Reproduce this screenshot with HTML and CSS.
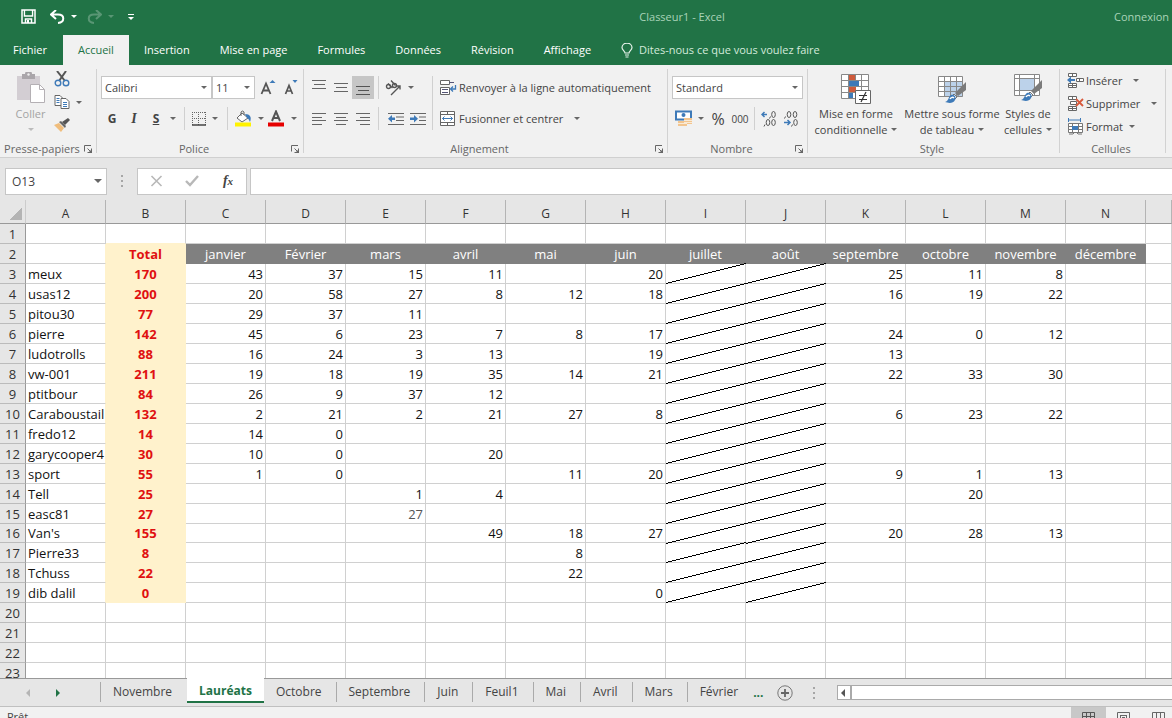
FILE: index.html
```html
<!DOCTYPE html>
<html lang="fr">
<head>
<meta charset="utf-8">
<title>Classeur1 - Excel</title>
<link rel="stylesheet" href="styles.css">
</head>
<body>
<svg class="defs" aria-hidden="true">
  <symbol id="launch" viewBox="0 0 9 9"><path d="M.5 6.500V.5H7M3.500 3.500L7 7M7.500 3.500V7.500H3.500" fill="none" stroke="#666"/><path d="M8 4v4H4z" fill="#666"/></symbol>
  <symbol id="brush" viewBox="0 0 22 22"><path d="M21 0v8l-8 6-3-3z" fill="#7b7b7b"/><path d="M9 12l3 3-2 2-3-3z" fill="#fff" stroke="#777"/><path d="M0 20c4-1 3-5 6-7 3-1 6 2 4 5-2 4-7 3-10 2z" fill="#3e7ab8"/><path d="M5 17c1-2 3-2 4-1" stroke="#fff" fill="none" stroke-width="1.500"/></symbol>
  <path id="slash" d="M0 19.500L80 -.5" stroke="#000" shape-rendering="crispEdges"/>
</svg>
<div class="app">
  <header class="titlebar">
    <div class="quick">
      <button aria-label="Enregistrer"><svg width="15" height="15" viewBox="0 0 15 15"><path d="M1 1h13v13H1zM3.500 1v6h8V1M4.500 14v-4h6v4" fill="none" stroke="#fff" stroke-width="1.500"/><path d="M6 11h2v3H6z" fill="#fff"/><path d="M4.500 2h6v4h-6z" fill="#217346"/></svg></button>
      <button aria-label="Annuler"><svg width="15" height="14" viewBox="0 0 15 14"><path d="M6 0L1 4.500 6 9M1 4.500h7c7 0 7 8 0 8.500" fill="none" stroke="#fff" stroke-width="2"/></svg><i class="caret"></i></button>
      <button class="faded" aria-label="Rétablir"><svg width="15" height="14" viewBox="0 0 15 14"><path d="M9 0l5 4.500L9 9M14 4.500H7c-7 0-7 8 0 8.500" fill="none" stroke="#fff" stroke-width="2"/></svg><i class="caret"></i></button>
      <button class="more" aria-label="Personnaliser"><i class="caret"></i></button>
    </div>
    <h1>Classeur1 - Excel</h1>
    <a href="#" class="login">Connexion</a>
  </header>
  <nav class="tabs">
    <button class="file">Fichier</button><button class="on">Accueil</button><button>Insertion</button><button>Mise en page</button><button>Formules</button><button>Données</button><button>Révision</button><button>Affichage</button>
    <button class="tell"><svg width="12" height="15" viewBox="0 0 12 15"><path d="M4 10c0-2-3-3-3-5.500a4.500 4 0 0 1 10 0C11 7 8 8 8 10zM4 12h4M4.500 14h3" fill="none" stroke="#e6f2ea" stroke-width="1.200"/></svg>Dites-nous ce que vous voulez faire</button>
  </nav>

  <section class="ribbon">
    <div class="group clip">
      <div class="body">
        <button class="big paste"><svg width="30" height="32" viewBox="0 0 30 32"><path d="M1 4h23v24H1z" fill="#d3ced3"/><path d="M6 2h3a3.500 3 0 0 1 7 0h3v5H6z" fill="#aaa6aa"/><circle cx="12.500" cy="2.500" r="1.200" fill="#eee"/><path d="M14.500 12.500h9l5 5v13h-14z" fill="#fff" stroke="#b4b0b4"/><path d="M23.500 12.500v5h5" fill="none" stroke="#b4b0b4"/></svg><span>Coller</span><i class="caret"></i></button>
        <div class="stack">
          <button aria-label="Couper"><svg width="16" height="16" viewBox="0 0 16 16"><path d="M3 0l8 10M12 0L5 10" stroke="#555" stroke-width="2"/><circle cx="4" cy="12" r="2.800" fill="none" stroke="#3e7ab8" stroke-width="1.400"/><circle cx="12" cy="12" r="2.800" fill="none" stroke="#3e7ab8" stroke-width="1.400"/></svg></button>
          <button aria-label="Copier"><svg width="16" height="16" viewBox="0 0 16 16"><path d="M1 1.500h5l3 3v7H1z" fill="#fff" stroke="#666"/><path d="M2.500 4.500h3m-3 2h3m-3 2h3" stroke="#3e7ab8"/><path d="M7 4.500h5l3 3v7H7z" fill="#fff" stroke="#666"/><path d="M9 8.500h4m-4 2h4m-4 2h4" stroke="#3e7ab8"/></svg><i class="caret"></i></button>
          <button aria-label="Reproduire la mise en forme"><svg width="16" height="14" viewBox="0 0 16 14"><path d="M0 7l5-2 5 5-3 4z" fill="#f0bd7c"/><path d="M5 4l2-1 5 5-1 2z" fill="#666"/><path d="M8 4l6-4 2 2-5 5z" fill="#555"/></svg></button>
        </div>
      </div>
      <footer><span>Presse-papiers</span><svg class="launch"><use href="#launch"/></svg></footer>
    </div>

    <div class="group font">
      <div class="body rows">
        <div class="row">
          <label class="combo wide"><select aria-label="Police"><option>Calibri</option></select></label>
          <label class="combo size"><select aria-label="Taille"><option>11</option></select></label>
          <button class="ic grow" aria-label="Agrandir"><svg width="17" height="17" viewBox="0 0 17 17"><path d="M1.500 15L6 4.500 10.500 15M3 11.500h6" fill="none" stroke="#555" stroke-width="1.800"/><path d="M9.500 4l3-3 3 3z" fill="#3e7ab8"/></svg></button>
          <button class="ic" aria-label="Réduire"><svg width="17" height="17" viewBox="0 0 17 17"><path d="M3.500 15L7 6.500l3.500 8.500M5 12h4.500" fill="none" stroke="#555" stroke-width="1.700"/><path d="M10.500 1h5l-2.500 3z" fill="#3e7ab8"/></svg></button>
        </div>
        <div class="row second">
          <button class="ic fmt b">G</button><button class="ic fmt i">I</button><button class="ic fmt u">S</button><button class="drop" aria-label="Soulignement"><i class="caret"></i></button>
          <span class="bar"></span>
          <button class="split" aria-label="Bordures"><svg width="14" height="14" viewBox="0 0 14 14"><path d="M0 .5h14M0 6.500h14M.5 0v13M6.500 0v13M13.500 0v13" stroke="#666" stroke-dasharray="1 1"/><path d="M0 13h14" stroke="#444" stroke-width="1.500"/></svg><i class="caret"></i></button>
          <span class="bar"></span>
          <button class="split" aria-label="Remplissage"><svg width="17" height="17" viewBox="0 0 17 17"><path d="M7 3l6 5-6 4-5-4z" fill="#fff" stroke="#666"/><path d="M6 6V2q1.500-2 3 0v3" fill="none" stroke="#666"/><path d="M10 4c5 0 7 3 5 8-1-2-1-3-3-4z" fill="#3e7ab8"/><path d="M0 12.500h16v4H0z" fill="#fff200"/></svg><i class="caret"></i></button>
          <button class="split" aria-label="Couleur"><svg width="17" height="17" viewBox="0 0 17 17"><path d="M4 11l4-9.500L12 11M5.500 8h5" fill="none" stroke="#555" stroke-width="2"/><path d="M0 12.500h16v4H0z" fill="#e60000"/></svg><i class="caret"></i></button>
        </div>
      </div>
      <footer><span>Police</span><svg class="launch"><use href="#launch"/></svg></footer>
    </div>

    <div class="group align">
      <div class="body">
        <div class="rows">
          <div class="row">
            <button class="ic" aria-label="Haut"><svg width="15" height="15" viewBox="0 0 15 15"><path d="M0 .5h14M2 4.500h11M0 8.500h14" stroke="#666"/></svg></button>
            <button class="ic" aria-label="Milieu"><svg width="15" height="15" viewBox="0 0 15 15"><path d="M0 3.500h14M2 7.500h11M0 11.500h14" stroke="#666"/></svg></button>
            <button class="ic pressed" aria-label="Bas"><svg width="15" height="15" viewBox="0 0 15 15"><path d="M0 6.500h14M2 10.500h11M0 14.500h14" stroke="#555"/></svg></button>
            <span class="bar"></span>
            <button class="split" aria-label="Orientation"><svg width="17" height="16" viewBox="0 0 17 16"><g fill="none" stroke="#555" stroke-width="1.400"><circle cx="3.500" cy="6.500" r="2"/><path d="M3 3.500l4.500 4.500M6 .5l4.500 5"/><circle cx="9.500" cy="5.500" r="2"/><path d="M6 15l9-9M11.500 6H15v3.500"/></g></svg><i class="caret"></i></button>
          </div>
          <div class="row second">
            <button class="ic" aria-label="Gauche"><svg width="15" height="12" viewBox="0 0 15 12"><path d="M0 .5h14M0 4.500h10M0 7.500h14M0 11.500h10" stroke="#666"/></svg></button>
            <button class="ic" aria-label="Centre"><svg width="15" height="12" viewBox="0 0 15 12"><path d="M0 .5h14M2 4.500h10M0 7.500h14M2 11.500h10" stroke="#666"/></svg></button>
            <button class="ic" aria-label="Droite"><svg width="15" height="12" viewBox="0 0 15 12"><path d="M0 .5h14M4 4.500h10M0 7.500h14M4 11.500h10" stroke="#666"/></svg></button>
            <span class="bar"></span>
            <button class="ic" aria-label="Diminuer le retrait"><svg width="17" height="14" viewBox="0 0 17 14"><path d="M0 1.500h16M8 5h8M8 8.500h8M0 12.500h16" stroke="#666"/><path d="M0 6.700L4 3v2.500h3V8H4v2.500z" fill="#3e7ab8"/></svg></button>
            <button class="ic" aria-label="Augmenter le retrait"><svg width="17" height="14" viewBox="0 0 17 14"><path d="M0 1.500h16M9 5h7M9 8.500h7M0 12.500h16" stroke="#666"/><path d="M8 6.700L4 3v2.500H0V8h4v2.500z" fill="#3e7ab8"/></svg></button>
          </div>
        </div>
        <span class="bar tall"></span>
        <div class="rows">
          <button class="row line"><svg width="17" height="16" viewBox="0 0 17 16"><path d="M.5.500h9v4h-9zM.5 7.500h9v7h-9z" fill="#fff" stroke="#666"/><path d="M2 9.500h6m-6 3h6M9 2.500h5" stroke="#557"/><path d="M15.500 5v4H11m2-2.500L10.500 9l2.500 2.500" fill="none" stroke="#3e7ab8" stroke-width="1.300"/></svg><span>Renvoyer à la ligne automatiquement</span></button>
          <button class="row line second"><svg width="17" height="16" viewBox="0 0 17 16"><path d="M.5.500h14v14H.5zM.5 3.500h14M.5 11.500h14M7.500.500v3M7.500 11.500v3" fill="#fff" stroke="#666"/><path d="M2.500 7.500h10M4.500 5.500l-2 2 2 2M10.500 5.500l2 2-2 2" fill="none" stroke="#3e7ab8"/></svg><span>Fusionner et centrer</span><i class="caret far"></i></button>
        </div>
      </div>
      <footer><span>Alignement</span><svg class="launch"><use href="#launch"/></svg></footer>
    </div>

    <div class="group number">
      <div class="body rows">
        <div class="row"><label class="combo full"><select aria-label="Format de nombre"><option>Standard</option></select></label></div>
        <div class="row second">
          <button class="split" aria-label="Monnaie"><svg width="17" height="17" viewBox="0 0 17 17"><path d="M1 1.500h15v8H1z" fill="#fff" stroke="#3e7ab8" stroke-width="2"/><circle cx="8.500" cy="5" r="2" fill="#3e7ab8"/><path d="M9 8h8v6H9zM3 11h9v5H3z" fill="#f2c58f"/><path d="M9 10.500h8M3 13.500h9M9 12.500h8" stroke="#f9ead6"/></svg><i class="caret"></i></button>
          <button class="ic pct">%</button><button class="ic zeros">000</button>
          <span class="bar"></span>
          <button class="ic dec" aria-label="Ajouter une décimale"><svg width="16" height="16" viewBox="0 0 16 16"><path d="M6 3.500H1M3.500 1L1 3.500 3.500 6" fill="none" stroke="#3e7ab8" stroke-width="1.500"/><g fill="none" stroke="#555"><ellipse cx="12.500" cy="3.500" rx="1.800" ry="3"/><ellipse cx="7" cy="11.500" rx="1.800" ry="3"/><ellipse cx="12.500" cy="11.500" rx="1.800" ry="3"/><path d="M9.500 5.500l-1 2M4 13.500l-1 2"/></g></svg></button>
          <button class="ic dec" aria-label="Réduire les décimales"><svg width="16" height="16" viewBox="0 0 16 16"><path d="M1 11.500h6M4.500 9L7 11.500 4.500 14" fill="none" stroke="#3e7ab8" stroke-width="1.500"/><g fill="none" stroke="#555"><ellipse cx="6" cy="3.500" rx="1.800" ry="3"/><ellipse cx="12" cy="3.500" rx="1.800" ry="3"/><ellipse cx="12.500" cy="11.500" rx="1.800" ry="3"/><path d="M2.500 5.500l-1 2M9.500 13.500l-1 2"/></g></svg></button>
        </div>
      </div>
      <footer><span>Nombre</span><svg class="launch"><use href="#launch"/></svg></footer>
    </div>

    <div class="group style">
      <div class="body">
        <button class="big"><svg width="32" height="32" viewBox="0 0 32 32"><path d="M1.500 1.500h27v24h-27z" fill="#fff"/><path d="M8 1h7v6H8zM8 14h8v6H8z" fill="#cf5b3c"/><path d="M8 8h11v6H8zM8 20h5v6H8z" fill="#3e7ab8"/><path d="M1.500 1.500h27v24h-27zM1 7.500h28M1 13.500h28M1 19.500h28M8.500 1v25M15.500 1v6M21.500 1v25" fill="none" stroke="#888"/><path d="M15.500 17.500h15v13h-15z" fill="#fff" stroke="#666"/><path d="M19 22.500h8M19 26.500h8M26 19l-5 10" stroke="#333" stroke-width="1.200"/></svg><span>Mise en forme<br>conditionnelle<i class="caret"></i></span></button>
        <button class="big"><svg width="32" height="32" viewBox="0 0 32 32"><path d="M2.500 3.500h24v20h-24z" fill="#fff"/><path d="M9 9h18v15H9z" fill="#bcd2ea"/><path d="M2.500 3.500h24v20h-24zM2 8.500h25M2 13.500h25M2 18.500h25M8.500 3v21M14.500 3v21M20.500 3v21" fill="none" stroke="#888"/><use href="#brush" x="9" y="9" width="22" height="22"/></svg><span>Mettre sous forme<br>de tableau<i class="caret"></i></span></button>
        <button class="big"><svg width="32" height="32" viewBox="0 0 32 32"><path d="M2.500 1.500h25v21h-25z" fill="#fff"/><path d="M8 6h14v11H8z" fill="#bcd2ea"/><path d="M2.500 1.500h25v21h-25zM2 5.500h26M2 17.500h26M7.500 1v22M22.500 1v22" fill="none" stroke="#888"/><use href="#brush" x="9" y="7" width="22" height="22"/></svg><span>Styles de<br>cellules<i class="caret"></i></span></button>
      </div>
      <footer><span>Style</span></footer>
    </div>

    <div class="group cells">
      <div class="body stack">
        <button class="line"><svg width="17" height="17" viewBox="0 0 17 17"><path d="M1.500 1.500h8v3h-8zM5.500 1.500v3M1.500 11.500h8v4h-8zM5.500 11.500v4M1 13.500h9M9.500 6.500h7v3h-7zM12.500 6.500v3" fill="#fff" stroke="#666"/><path d="M0 8l4-3.500V7h4v2H4v2.500z" fill="#3e7ab8"/></svg><span>Insérer</span><i class="caret far"></i></button>
        <button class="line"><svg width="17" height="17" viewBox="0 0 17 17"><path d="M1.500 1.500h8v3h-8zM5.500 1.500v3M1.500 11.500h8v4h-8zM5.500 11.500v4M1 13.500h9M3.500 6.500h6v3h-6z" fill="#fff" stroke="#666"/><path d="M9 4l7 7M16 4l-7 7" stroke="#d8593b" stroke-width="1.800"/></svg><span>Supprimer</span><i class="caret far"></i></button>
        <button class="line"><svg width="17" height="17" viewBox="0 0 17 17"><path d="M1.500 0v4M13.500 0v4M2 2h11" stroke="#3e7ab8"/><path d="M1.500 5.500h14v9h-14zM1 8.500h15M1 11.500h15M5.500 5v10M11.500 5v10" fill="#fff" stroke="#777"/><path d="M5 8h6v4H5z" fill="#3e7ab8"/><path d="M2 16h4l1-1M15 16h-4l-1-1" fill="none" stroke="#777"/></svg><span>Format</span><i class="caret"></i></button>
      </div>
      <footer><span>Cellules</span></footer>
    </div>
  </section>

  <section class="formula">
    <label class="combo name"><input type="text" value="O13" aria-label="Zone Nom"></label>
    <span class="dots"></span>
    <div class="fx">
      <button aria-label="Annuler la saisie"><svg width="13" height="12" viewBox="0 0 13 12"><path d="M1.500 1l10 10M11.500 1l-10 10" stroke="#b8b8b8" stroke-width="1.600"/></svg></button>
      <button aria-label="Valider"><svg width="14" height="12" viewBox="0 0 14 12"><path d="M1 6l4 4 8-9" fill="none" stroke="#b8b8b8" stroke-width="2.400"/></svg></button>
      <button class="fn"><i>f</i><small>x</small></button>
    </div>
    <input class="entry" type="text" aria-label="Barre de formule">
  </section>

  <main class="sheet">
    <table>
      <colgroup><col class="num"><col span="14" class="std"><col></colgroup>
      <thead><tr><th class="corner"><th>A<th>B<th>C<th>D<th>E<th>F<th>G<th>H<th>I<th>J<th>K<th>L<th>M<th>N<th></tr></thead>
      <tbody>
        <tr class="first"><th>1<td><td><td><td><td><td><td><td><td><td><td><td><td><td><td></tr>
        <tr class="months"><th>2<td><td>Total<td>janvier<td>Février<td>mars<td>avril<td>mai<td>juin<td>juillet<td>août<td>septembre<td>octobre<td>novembre<td>décembre<td></tr>
      </tbody>
      <tbody class="data">
        <tr><th>3<td>meux<td>170<td>43<td>37<td>15<td>11<td><td>20<td><svg><use href="#slash"/></svg><td><svg><use href="#slash"/></svg><td>25<td>11<td>8<td><td></tr>
        <tr><th>4<td>usas12<td>200<td>20<td>58<td>27<td>8<td>12<td>18<td><svg><use href="#slash"/></svg><td><svg><use href="#slash"/></svg><td>16<td>19<td>22<td><td></tr>
        <tr><th>5<td>pitou30<td>77<td>29<td>37<td>11<td><td><td><td><svg><use href="#slash"/></svg><td><svg><use href="#slash"/></svg><td><td><td><td><td></tr>
        <tr><th>6<td>pierre<td>142<td>45<td>6<td>23<td>7<td>8<td>17<td><svg><use href="#slash"/></svg><td><svg><use href="#slash"/></svg><td>24<td>0<td>12<td><td></tr>
        <tr><th>7<td>ludotrolls<td>88<td>16<td>24<td>3<td>13<td><td>19<td><svg><use href="#slash"/></svg><td><svg><use href="#slash"/></svg><td>13<td><td><td><td></tr>
        <tr><th>8<td>vw-001<td>211<td>19<td>18<td>19<td>35<td>14<td>21<td><svg><use href="#slash"/></svg><td><svg><use href="#slash"/></svg><td>22<td>33<td>30<td><td></tr>
        <tr><th>9<td>ptitbour<td>84<td>26<td>9<td>37<td>12<td><td><td><svg><use href="#slash"/></svg><td><svg><use href="#slash"/></svg><td><td><td><td><td></tr>
        <tr><th>10<td>Caraboustail<td>132<td>2<td>21<td>2<td>21<td>27<td>8<td><svg><use href="#slash"/></svg><td><svg><use href="#slash"/></svg><td>6<td>23<td>22<td><td></tr>
        <tr><th>11<td>fredo12<td>14<td>14<td>0<td><td><td><td><td><svg><use href="#slash"/></svg><td><svg><use href="#slash"/></svg><td><td><td><td><td></tr>
        <tr><th>12<td>garycooper4<td>30<td>10<td>0<td><td>20<td><td><td><svg><use href="#slash"/></svg><td><svg><use href="#slash"/></svg><td><td><td><td><td></tr>
        <tr><th>13<td>sport<td>55<td>1<td>0<td><td><td>11<td>20<td><svg><use href="#slash"/></svg><td><svg><use href="#slash"/></svg><td>9<td>1<td>13<td><td></tr>
        <tr><th>14<td>Tell<td>25<td><td><td>1<td>4<td><td><td><svg><use href="#slash"/></svg><td><svg><use href="#slash"/></svg><td><td>20<td><td><td></tr>
        <tr><th>15<td>easc81<td>27<td><td><td class="soft">27<td><td><td><td><svg><use href="#slash"/></svg><td><svg><use href="#slash"/></svg><td><td><td><td><td></tr>
        <tr class="short"><th>16<td>Van's<td>155<td><td><td><td>49<td>18<td>27<td><svg><use href="#slash"/></svg><td><svg><use href="#slash"/></svg><td>20<td>28<td>13<td><td></tr>
        <tr><th>17<td>Pierre33<td>8<td><td><td><td><td>8<td><td><svg><use href="#slash"/></svg><td><svg><use href="#slash"/></svg><td><td><td><td><td></tr>
        <tr><th>18<td>Tchuss<td>22<td><td><td><td><td>22<td><td><svg><use href="#slash"/></svg><td><svg><use href="#slash"/></svg><td><td><td><td><td></tr>
        <tr><th>19<td>dib dalil<td>0<td><td><td><td><td><td>0<td><svg><use href="#slash"/></svg><td><svg><use href="#slash"/></svg><td><td><td><td><td></tr>
      </tbody>
      <tbody>
        <tr><th>20<td><td><td><td><td><td><td><td><td><td><td><td><td><td><td></tr>
        <tr><th>21<td><td><td><td><td><td><td><td><td><td><td><td><td><td><td></tr>
        <tr><th>22<td><td><td><td><td><td><td><td><td><td><td><td><td><td><td></tr>
        <tr><th>23<td><td><td><td><td><td><td><td><td><td><td><td><td><td><td></tr>
      </tbody>
    </table>
  </main>

  <nav class="sheets">
    <div class="move"><button class="prev" aria-label="Précédent"></button><button class="next" aria-label="Suivant"></button></div>
    <button class="tab">Novembre</button><button class="tab on">Lauréats</button><button class="tab">Octobre</button><button class="tab">Septembre</button><button class="tab">Juin</button><button class="tab">Feuil1</button><button class="tab">Mai</button><button class="tab">Avril</button><button class="tab">Mars</button><button class="tab">Février</button>
    <button class="etc">...</button>
    <button class="add" aria-label="Nouvelle feuille"><svg width="16" height="16" viewBox="0 0 16 16"><circle cx="8" cy="8" r="7.200" fill="none" stroke="#777"/><path d="M8 4v8M4 8h8" stroke="#666" stroke-width="1.800"/></svg></button>
    <span class="dots"></span>
    <div class="scroll"><button aria-label="Défiler à gauche"></button><span></span></div>
  </nav>
  <footer class="status">
    <span>Prêt</span>
    <div class="views">
      <button class="on" aria-label="Normal"><svg width="13" height="12" viewBox="0 0 13 12"><path d="M.5.500h12v11H.5zM0 4.500h13M0 8.500h13M4.500 0v12M8.500 0v12" fill="none" stroke="#555"/></svg></button>
      <button aria-label="Mise en page"><svg width="13" height="12" viewBox="0 0 13 12"><path d="M.5.500h12v11H.5zM3.500 3v9M9.500 3v9M3 3.500h7M5 5.500h3M5 7.500h3" fill="none" stroke="#666"/></svg></button>
      <button aria-label="Sauts de page"><svg width="13" height="12" viewBox="0 0 13 12"><path d="M.5.500h12v11H.5zM4.500 0v7M8.500 0v7M0 7.500h9" fill="none" stroke="#666"/></svg></button>
    </div>
  </footer>
</div>
</body>
</html>
```
FILE: styles.css
```css
* { box-sizing: border-box; }
body { margin: 0; overflow: hidden; font: 12px/16px "Open Sans", "Noto Sans", sans-serif; color: #444; }
button, input, select { margin: 0; padding: 0; border: 0; background: none; font: inherit; color: inherit; }
button { display: flex; align-items: center; white-space: nowrap; }
svg { display: block; flex: none; }
.defs { position: absolute; width: 0; height: 0; }
.app { display: flex; flex-direction: column; height: calc(100vh + 10px); background: #e6e6e6; }

.caret { flex: none; display: inline-block; border: 3px solid transparent; border-top-color: #666; border-bottom: 0; }
.bar { width: 1px; height: 23px; background: #d0d0d0; }
.dots { width: 2px; height: 12px; background: repeating-linear-gradient(#a6a6a6 0 2px, transparent 2px 5px); }

/* Title bar */
.titlebar { display: flex; flex: none; align-items: center; height: 35px; padding-bottom: 2px; background: #217346; color: #a9d3b8; font-size: 11px; overflow: hidden; }
.quick { display: flex; align-items: center; flex: 0 0 250px; padding-left: 21px; gap: 14px; }
.quick button { gap: 6px; }
.quick .caret { border-top-color: #fff; }
.quick .faded { opacity: .25; margin-left: -4px; }
.quick .more { padding-top: 2px; border-top: 1px solid #fff; }
.titlebar h1 { flex: 1; margin: 0; font-size: 11px; font-weight: 400; text-align: center; }
.login { flex: 0 0 58px; color: inherit; text-decoration: none; }

.tabs { display: flex; flex: none; height: 30px; background: #217346; color: #fff; font-size: 11px; overflow: hidden; }
.tabs button { padding: 0 15px; }
.tabs .file { padding: 0 16px 0 13px; }
.tabs .on { background: #f1f1f1; color: #217346; }
.tabs .tell { gap: 6px; color: #d3eadb; }

/* Ribbon */
.ribbon { display: flex; flex: none; height: 93px; padding-top: 4px; background: #f1f1f1; border-bottom: 1px solid #d0d0d0; font-size: 11px; }
.group { display: flex; flex-direction: column; flex: none; background: linear-gradient(#d2d2d2, #d2d2d2) right top / 1px 84px no-repeat; }
.group .body { display: flex; flex: 1; }
.group footer { display: flex; align-items: center; height: 16px; color: #666; padding-right: 4px; }
.group footer span { flex: 1; text-align: center; white-space: nowrap; }
.launch { width: 9px; height: 9px; }
.group .rows { flex-direction: column; padding-top: 7px; }
.row { display: flex; align-items: center; height: 23px; }
.second { margin-top: 8px; }
.stack { display: flex; flex-direction: column; }
.big { flex-direction: column; gap: 1px; text-align: center; padding-top: 4px; }
.big .caret { margin-left: 4px; vertical-align: 3px; }
.ic { justify-content: center; width: 22px; height: 23px; }
.split { gap: 6px; height: 23px; }
.line { gap: 2px; }
.line .caret { margin-left: 4px; }
.line .far { margin-left: 9px; }

.combo { position: relative; display: block; height: 23px; background: #fff; border: 1px solid #c6c6c6; }
.combo select, .combo input { width: 100%; height: 100%; padding: 0 3px; appearance: none; outline: 0; }
.combo::after { content: ""; position: absolute; right: 4px; top: 9px; border: 3px solid transparent; border-top-color: #666; border-bottom: 0; pointer-events: none; }

.clip { width: 97px; }
.clip .body { padding-left: 14px; gap: 7px; }
.clip .stack { gap: 7px; padding-top: 2px; }
.clip .stack button { height: 16px; gap: 6px; }
.paste { color: #a3a3a3; width: 33px; }
.big.paste { padding-top: 3px; gap: 2px; }
.paste .caret { margin: 4px 0 0; border-top-color: #bbb; }

.font { width: 207px; }
.font .rows { padding-left: 4px; }
.wide { width: 111px; }
.size { width: 43px; }
.grow { margin-left: 2px; }
.fmt { font-weight: 700; font-size: 12px; }
.i { font-family: "Liberation Serif", serif; font-style: italic; font-size: 14px; }
.u { text-decoration: underline; }
.drop { width: 12px; justify-content: center; }
.font .bar { margin: 0 7px 0 5px; }
.font .split { margin-right: 7px; }
.font .split svg + .caret { margin-right: -3px; }

.align { width: 364px; }
.align .rows { padding-left: 4px; }
.align .pressed { background: #c6c6c6; }
.align .bar { margin: 0 6px 0 4px; }
.align .bar.tall { height: 54px; margin: 7px 3px 0; }

.number { width: 140px; }
.number .rows { padding-left: 4px; }
.full { width: 131px; }
.number .split { padding-left: 3px; }
.pct { font-size: 16px; margin-left: 3px; }
.zeros { font-size: 10px; }
.number .bar { margin: 0 3px; }

.style { width: 252px; }
.style .body { display: grid; grid-template-columns: 96px 96px 56px; align-items: start; }
.cells { width: 106px; }
.cells .stack { padding-left: 7px; }
.cells .stack button { height: 23px; }

/* Formula bar */
.formula { display: flex; flex: none; align-items: center; height: 42px; padding: 4px 0 0 5px; }
.formula .combo, .fx, .entry { height: 27px; background: #fff; border: 1px solid #c6c6c6; }
.formula .name { width: 102px; }
.name input { padding: 0 6px; }
.name::after { top: 10px; border-width: 4px; border-bottom: 0; }
.formula .dots { margin: 0 14px; }
.fx { display: flex; width: 110px; margin-right: 3px; }
.fx button { flex: 1; justify-content: center; }
.fx .fn { font: bold 14px/16px "Liberation Serif", serif; }
.fn small { font-size: 11px; font-style: italic; }
.entry { flex: 1; min-width: 0; border-right: 0; padding: 0 6px; }

/* Grid */
.sheet { flex: 1; min-height: 0; overflow: hidden; background: #fff; }
table { width: 100%; table-layout: fixed; border-collapse: separate; border-spacing: 0; color: #111; font-size: 13px; line-height: 18px; }
.num { width: 26px; }
.std { width: 80px; }
th { padding: 0; font-weight: 400; color: #333; background: #e6e6e6; border-right: 1px solid #999; border-bottom: 1px solid #bbb; }
thead th { height: 24px; padding-top: 4px; font-size: 12px; border-right-color: #b4b4b4; border-bottom-color: #999; }
.corner { background: linear-gradient(135deg, transparent 50%, #b4b4b4 50%) no-repeat 10px 8px / 12px 12px #e6e6e6; border-right-color: #ccc; }
tbody th, td { height: 20px; }
td { padding: 0 2px; border-right: 1px solid #d0d0d0; border-bottom: 1px solid #d0d0d0; text-align: right; white-space: nowrap; overflow: hidden; }
td:nth-child(2) { text-align: left; }
.short th, .short td { height: 19px; }
.first td:nth-child(3) { border-bottom-color: #fff2cc; }
.months td:nth-child(2), .data td:nth-child(2) { border-right-color: #fff2cc; }
.months td { text-align: center; padding: 0; }
.months td:nth-child(n+4):nth-child(-n+15) { background: #808080; border-color: #808080; color: #fff; }
.months td:nth-child(3), .data td:nth-child(3) { background: #fff2cc; border-color: #fff2cc; color: #e01010; font-weight: 700; text-align: center; }
.data td:nth-child(10), .data td:nth-child(11) { padding: 0; vertical-align: top; overflow: visible; }
td svg { width: 100%; height: 18px; overflow: visible; }
.data .soft { color: #555; }

/* Sheet tabs */
.sheets { display: flex; flex: none; height: 29px; border-top: 1px solid #999; border-bottom: 1px solid #c0c0c0; }
.move { display: flex; align-items: center; flex: 0 0 101px; height: 27px; padding-left: 26px; gap: 26px; }
.prev, .next { border: 4px solid transparent; }
.prev { border-right-color: #b5b5b5; border-left: 0; }
.next { border-left-color: #217346; border-right: 0; }
.tab { position: relative; height: 26px; padding: 0 15px 0 12px; }
.tab::before { content: ""; position: absolute; left: -1px; top: 3px; width: 1px; height: 20px; background: #aaa; }
.sheets .on { height: 25px; padding: 2px 12px 0; margin-top: -1px; background: #fff; border-bottom: 2px solid #217346; color: #217346; font-weight: 700; }
.on::before, .on + .tab::before { display: none; }
.etc { padding: 0 14px 0 0; color: #217346; font-weight: 700; }
.sheets .dots { margin: 8px 22px 0 20px; }
.scroll { display: flex; flex: 1; align-self: center; height: 15px; background: #fff; border: 1px solid #aaa; border-right: 0; }
.scroll button { width: 14px; border-right: 2px solid #aaa; }
.scroll button::before { content: ""; margin-left: 3px; border: 4px solid transparent; border-right-color: #555; border-left: 0; }

.status { display: flex; flex: none; justify-content: space-between; height: 21px; background: #f1f1f1; font-size: 11px; line-height: 20px; }
.status span { padding-left: 7px; }
.views { display: flex; flex: 0 0 101px; overflow: hidden; }
.views button { flex: none; width: 35px; padding: 0 11px; }
.views .on { background: #c8c8c8; }
```
